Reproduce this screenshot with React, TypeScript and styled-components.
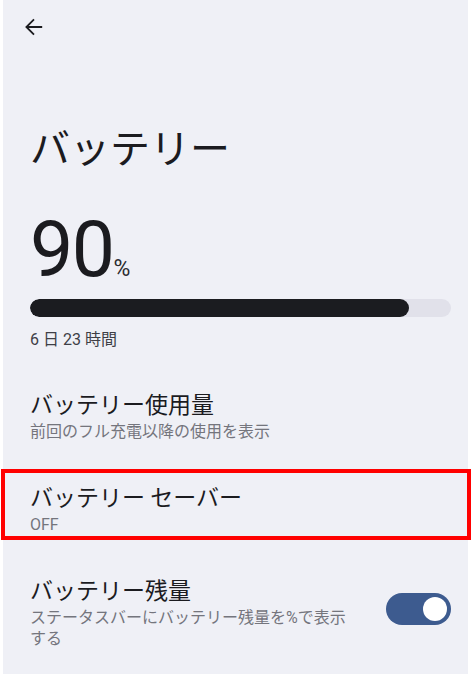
import React from "react";
import styled, { createGlobalStyle } from "styled-components";

const Global = createGlobalStyle`
  html, body { margin: 0; padding: 0; background: #ffffff; }
  body { font-family: Roboto, "Noto Sans CJK JP", sans-serif; }
`;

const Frame = styled.div`
  width: 472px;
  height: 674px;
  background: #ffffff;
  padding: 0 4px 0 3px;
  box-sizing: border-box;
  overflow: hidden;
`;

const Screen = styled.div`
  height: 100%;
  background: #eff0f6;
  color: #1b1b1f;
  display: flex;
  flex-direction: column;
`;

const TopBar = styled.div`
  height: 54px;
  display: flex;
  align-items: center;
  padding-left: 22px;
`;

const BackButton = styled.button`
  border: 0;
  background: transparent;
  padding: 0;
  width: 18px;
  height: 18px;
  display: flex;
  color: #1b1b1f;
`;

const Heading = styled.h1`
  margin: 68px 0 0;
  padding-left: 27px;
  font-family: "Noto Sans CJK JP", sans-serif;
  font-weight: 400;
  font-size: 40px;
  line-height: 48px;
  letter-spacing: 0;
`;

const Summary = styled.div`
  padding: 0 17px 0 27px;
  margin-top: 40px;
  display: flex;
  flex-direction: column;
`;

const Level = styled.div`
  display: flex;
  align-items: baseline;
  gap: 0;
`;

const LevelValue = styled.span`
  font-family: Roboto, sans-serif;
  font-size: 77px;
  line-height: 80px;
  letter-spacing: -1.5px;
`;

const LevelUnit = styled.span`
  font-family: Roboto, sans-serif;
  font-size: 23px;
  color: #2a2b30;
`;

const Track = styled.div`
  margin-top: 9px;
  height: 18px;
  border-radius: 9px;
  background: #e1e1ea;
  overflow: hidden;
`;

const Fill = styled.div`
  height: 100%;
  border-radius: 9px;
  background: #1b1c20;
`;

const Remaining = styled.div`
  margin-top: 12px;
  font-size: 16px;
  line-height: 21px;
  color: #3e3f46;
`;

const List = styled.div`
  margin-top: 21px;
  display: flex;
  flex-direction: column;
`;

const Row = styled.div<{ $highlighted?: boolean }>`
  position: relative;
  display: flex;
  align-items: center;
  gap: 27px;
  padding: 17px 17px 22px 27px;
  ${(p) =>
    p.$highlighted &&
    `
    &::after {
      content: "";
      position: absolute;
      left: -2px;
      right: -3px;
      top: 5px;
      bottom: 17px;
      border: 4px solid #ff0000;
      pointer-events: none;
    }
  `}
`;

const RowText = styled.div`
  flex: 1;
  display: flex;
  flex-direction: column;
`;

const RowTitle = styled.div`
  font-family: "Noto Sans CJK JP", sans-serif;
  font-size: 23px;
  line-height: 30px;
  color: #1b1b1f;
`;

const RowSub = styled.div`
  margin-top: 3px;
  font-family: Roboto, "Noto Sans CJK JP", sans-serif;
  font-size: 16px;
  line-height: 21px;
  color: #74757d;
`;

const Switch = styled.div<{ $on: boolean }>`
  flex: none;
  width: 65px;
  height: 32px;
  border-radius: 16px;
  background: ${(p) => (p.$on ? "#3d5b8f" : "#c4c6d0")};
  display: flex;
  align-items: center;
  justify-content: ${(p) => (p.$on ? "flex-end" : "flex-start")};
  padding: 0 4px;
  box-sizing: border-box;
  margin-top: -6px;
`;

const Thumb = styled.div`
  width: 24px;
  height: 24px;
  border-radius: 50%;
  background: #ffffff;
`;

export default function App() {
  const level = 90;
  return (
    <>
      <Global />
      <Frame>
        <Screen>
          <TopBar>
            <BackButton aria-label="戻る">
              <svg width="18" height="18" viewBox="0 0 18 18" fill="none">
                <path
                  d="M17.2 9H1.6M9 1.4L1.4 9 9 16.6"
                  stroke="currentColor"
                  strokeWidth="1.8"
                />
              </svg>
            </BackButton>
          </TopBar>
          <Heading>バッテリー</Heading>
          <Summary>
            <Level>
              <LevelValue>{level}</LevelValue>
              <LevelUnit>%</LevelUnit>
            </Level>
            <Track>
              <Fill style={{ width: `${level}%` }} />
            </Track>
            <Remaining>6 日 23 時間</Remaining>
          </Summary>
          <List>
            <Row>
              <RowText>
                <RowTitle>バッテリー使用量</RowTitle>
                <RowSub>前回のフル充電以降の使用を表示</RowSub>
              </RowText>
            </Row>
            <Row $highlighted>
              <RowText>
                <RowTitle>バッテリー セーバー</RowTitle>
                <RowSub>OFF</RowSub>
              </RowText>
            </Row>
            <Row>
              <RowText>
                <RowTitle>バッテリー残量</RowTitle>
                <RowSub>ステータスバーにバッテリー残量を%で表示する</RowSub>
              </RowText>
              <Switch $on>
                <Thumb />
              </Switch>
            </Row>
          </List>
        </Screen>
      </Frame>
    </>
  );
}
